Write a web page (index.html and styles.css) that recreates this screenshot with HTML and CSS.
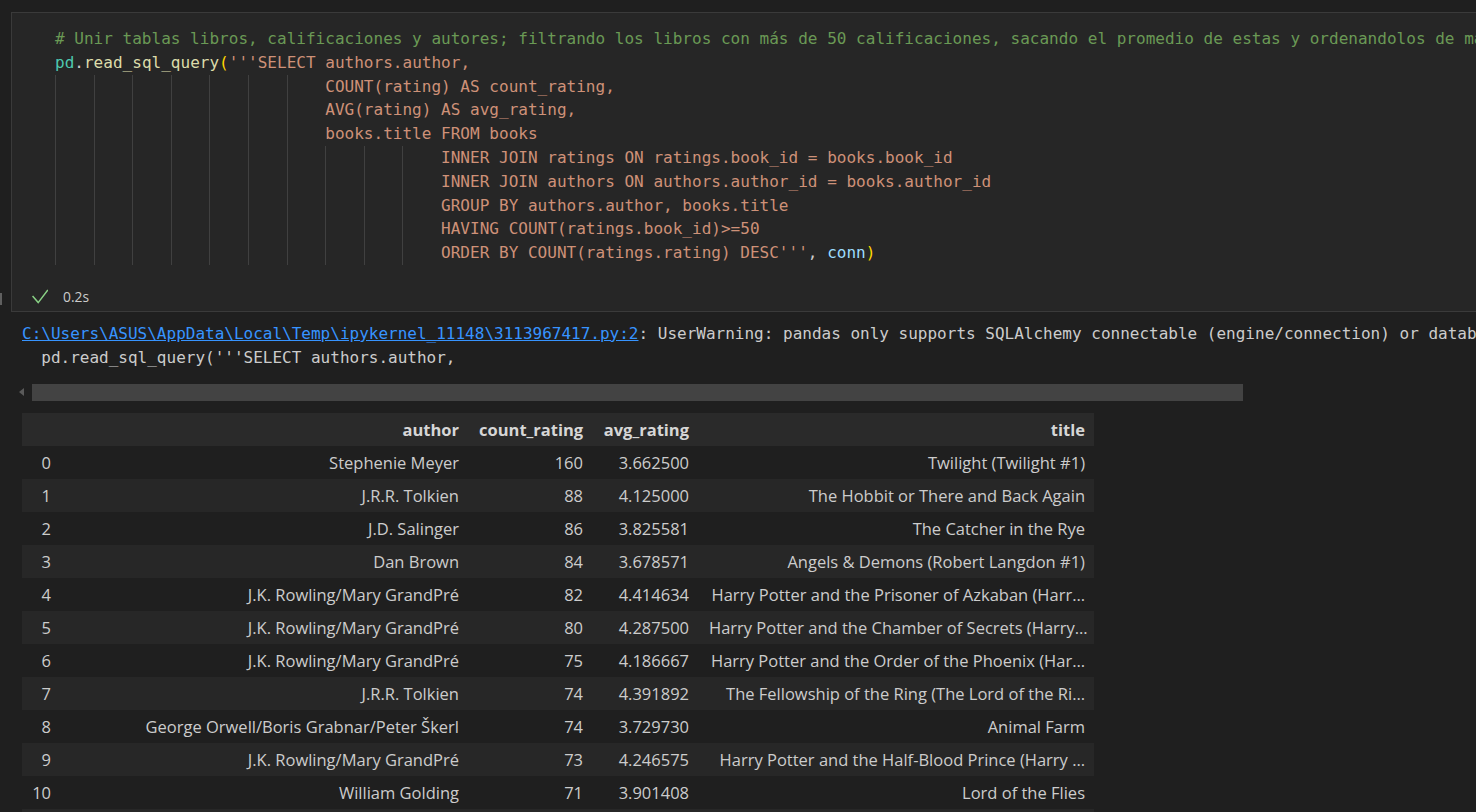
FILE: index.html
```html
<!DOCTYPE html>
<html lang="es">
<head>
<meta charset="utf-8">
<title>Notebook</title>
<link rel="stylesheet" href="styles.css">
</head>
<body>
<div class="notebook">
  <section class="cell">
    <div class="code">
      <div class="ln"><span class="c-com"># Unir tablas libros, calificaciones y autores; filtrando los libros con más de 50 calificaciones, sacando el promedio de estas y ordenandolos de mayor a menor</span></div>
      <div class="ln"><span class="c-mod">pd</span><span class="c-pun">.</span><span class="c-fn">read_sql_query</span><span class="c-br">(</span><span class="c-str">'''SELECT authors.author,</span></div>
      <div class="ln g7"><span class="c-str">                            COUNT(rating) AS count_rating,</span></div>
      <div class="ln g7"><span class="c-str">                            AVG(rating) AS avg_rating,</span></div>
      <div class="ln g7"><span class="c-str">                            books.title FROM books</span></div>
      <div class="ln g10"><span class="c-str">                                        INNER JOIN ratings ON ratings.book_id = books.book_id</span></div>
      <div class="ln g10"><span class="c-str">                                        INNER JOIN authors ON authors.author_id = books.author_id</span></div>
      <div class="ln g10"><span class="c-str">                                        GROUP BY authors.author, books.title</span></div>
      <div class="ln g10"><span class="c-str">                                        HAVING COUNT(ratings.book_id)&gt;=50</span></div>
      <div class="ln g10"><span class="c-str">                                        ORDER BY COUNT(ratings.rating) DESC'''</span><span class="c-pun">, </span><span class="c-var">conn</span><span class="c-br">)</span></div>
    </div>
    <div class="status">
      <svg class="check" width="16" height="16" viewBox="0 0 16 16"><polyline points="1,7.6 6.2,13.6 15.4,1.6" fill="none" stroke="#89d185" stroke-width="1.5" stroke-linecap="square" stroke-linejoin="miter"/></svg>
      <span class="time">0.2s</span>
    </div>
    <div class="sash"></div>
  </section>

  <section class="output">
    <div class="stderr">
      <div class="oline"><a class="link" href="#">C:\Users\ASUS\AppData\Local\Temp\ipykernel_11148\3113967417.py:2</a>: UserWarning: pandas only supports SQLAlchemy connectable (engine/connection) or database string URI or sqlite3 DBAPI2 connection.</div>
      <div class="oline">  pd.read_sql_query('''SELECT authors.author,</div>
    </div>
    <div class="hscroll"><span class="arrow"></span><div class="thumb"></div></div>

    <table class="df">
      <colgroup>
        <col class="w-idx"><col class="w-author"><col class="w-count"><col class="w-avg"><col class="w-title">
      </colgroup>
      <thead>
        <tr><th></th><th>author</th><th>count_rating</th><th>avg_rating</th><th class="t">title</th></tr>
      </thead>
      <tbody>
        <tr><td class="idx">0</td><td>Stephenie Meyer</td><td>160</td><td>3.662500</td><td class="t">Twilight (Twilight #1)</td></tr>
        <tr><td class="idx">1</td><td>J.R.R. Tolkien</td><td>88</td><td>4.125000</td><td class="t">The Hobbit or There and Back Again</td></tr>
        <tr><td class="idx">2</td><td>J.D. Salinger</td><td>86</td><td>3.825581</td><td class="t">The Catcher in the Rye</td></tr>
        <tr><td class="idx">3</td><td>Dan Brown</td><td>84</td><td>3.678571</td><td class="t">Angels &amp; Demons (Robert Langdon #1)</td></tr>
        <tr><td class="idx">4</td><td>J.K. Rowling/Mary GrandPré</td><td>82</td><td>4.414634</td><td class="t">Harry Potter and the Prisoner of Azkaban (Harr…</td></tr>
        <tr><td class="idx">5</td><td>J.K. Rowling/Mary GrandPré</td><td>80</td><td>4.287500</td><td class="t">Harry Potter and the Chamber of Secrets (Harry…</td></tr>
        <tr><td class="idx">6</td><td>J.K. Rowling/Mary GrandPré</td><td>75</td><td>4.186667</td><td class="t">Harry Potter and the Order of the Phoenix (Har…</td></tr>
        <tr><td class="idx">7</td><td>J.R.R. Tolkien</td><td>74</td><td>4.391892</td><td class="t">The Fellowship of the Ring (The Lord of the Ri…</td></tr>
        <tr><td class="idx">8</td><td>George Orwell/Boris Grabnar/Peter Škerl</td><td>74</td><td>3.729730</td><td class="t">Animal Farm</td></tr>
        <tr><td class="idx">9</td><td>J.K. Rowling/Mary GrandPré</td><td>73</td><td>4.246575</td><td class="t">Harry Potter and the Half-Blood Prince (Harry …</td></tr>
        <tr><td class="idx">10</td><td>William Golding</td><td>71</td><td>3.901408</td><td class="t">Lord of the Flies</td></tr>
        <tr class="blank"><td></td><td></td><td></td><td></td><td></td></tr>
      </tbody>
    </table>
  </section>
</div>
</body>
</html>
```

FILE: styles.css
```css
html, body {
  margin: 0;
  padding: 0;
  height: 100%;
  overflow: hidden;
  background: #1f1f1f;
}

.notebook {
  padding-top: 12px;
}

/* ---------- code cell ---------- */
.cell {
  position: relative;
  margin-left: 11px;
  width: 1540px;
  background: #262626;
  border: 1px solid #3a3a3a;
  padding: 14px 0 2px 0;
}

.code {
  padding-left: 43px;
  font-family: "DejaVu Sans Mono", "Liberation Mono", monospace;
  font-size: 16.05px;
  line-height: 23.8px;
  color: #cccccc;
}

.ln {
  height: 23.8px;
  white-space: pre;
}

.g7 {
  background-image: repeating-linear-gradient(to right, #404040 0 1px, transparent 1px 4ch);
  background-size: 28ch 100%;
  background-repeat: no-repeat;
}

.g10 {
  background-image: repeating-linear-gradient(to right, #404040 0 1px, transparent 1px 4ch);
  background-size: 40ch 100%;
  background-repeat: no-repeat;
}

.c-com { color: #6a9955; }
.c-mod { color: #4ec9b0; }
.c-pun { color: #cccccc; }
.c-fn  { color: #dcdcaa; }
.c-br  { color: #ffd700; }
.c-str { color: #ce9178; }
.c-var { color: #9cdcfe; }

.status {
  display: flex;
  align-items: center;
  height: 24px;
  margin-top: 20px;
  padding-left: 20px;
  gap: 15px;
  font-family: "Open Sans", "Noto Sans", sans-serif;
  font-size: 13.8px;
  color: #cccccc;
}

.check {
  display: block;
  flex: none;
}

.sash {
  position: absolute;
  left: -12px;
  top: 280px;
  width: 2px;
  height: 12px;
  background: #5f5f5f;
}

/* ---------- output ---------- */
.output {
  padding: 10px 0 0 22px;
}

.stderr {
  font-family: "DejaVu Sans Mono", "Liberation Mono", monospace;
  font-size: 16px;
  line-height: 23.8px;
  color: #cccccc;
}

.oline {
  height: 23.8px;
  white-space: pre;
}

.link {
  color: #3794ff;
  text-decoration: underline;
}

.hscroll {
  display: flex;
  align-items: center;
  height: 17px;
  margin: 14.4px 0 0 -3px;
  gap: 8px;
}

.arrow {
  width: 0;
  height: 0;
  border-top: 4.5px solid transparent;
  border-bottom: 4.5px solid transparent;
  border-right: 5px solid #5a5a5a;
}

.thumb {
  width: 1211px;
  height: 17px;
  background: #434343;
}

/* ---------- dataframe ---------- */
.df {
  margin-top: 11.7px;
  width: 1072px;
  table-layout: fixed;
  border-collapse: collapse;
  border-spacing: 0;
  font-family: "Open Sans", "Noto Sans", sans-serif;
  font-size: 16.5px;
  color: #cccccc;
}

.w-idx { width: 39px; }
.w-author { width: 408px; }
.w-count { width: 124px; }
.w-avg { width: 106px; }
.w-title { width: 395px; }

.df th,
.df td {
  height: 33px;
  padding: 0 10px;
  text-align: right;
  white-space: nowrap;
  box-sizing: border-box;
}

.df th {
  font-weight: 700;
  color: #d6d6d6;
}

.df thead tr {
  background: #2a2a2a;
}

.df tbody tr:nth-child(even) {
  background: #272727;
}

.df .t {
  padding-right: 9px;
}
```
